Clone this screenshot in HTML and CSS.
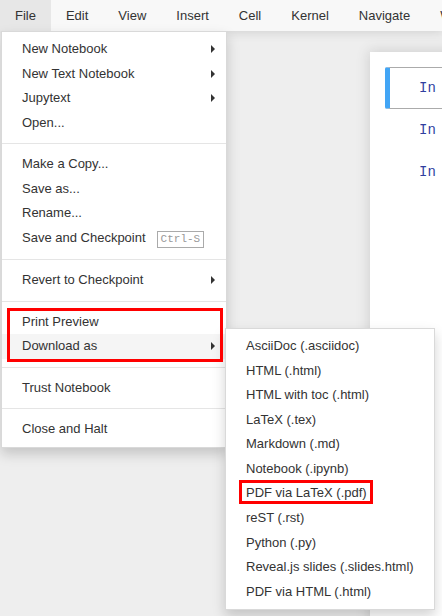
FILE: index.html
```html
<!DOCTYPE html>
<html>
<head>
<meta charset="utf-8">
<link rel="stylesheet" href="styles.css">
</head>
<body>
<div class="menubar">
  <ul class="nav">
    <li class="nav-item active">File
      <ul class="dropdown file-menu">
        <li class="item has-sub">New Notebook<span class="caret"></span></li>
        <li class="item has-sub">New Text Notebook<span class="caret"></span></li>
        <li class="item has-sub">Jupytext<span class="caret"></span></li>
        <li class="item">Open...</li>
        <li class="divider"></li>
        <li class="item">Make a Copy...</li>
        <li class="item">Save as...</li>
        <li class="item">Rename...</li>
        <li class="item">Save and Checkpoint<span class="kb">Ctrl-S</span></li>
        <li class="divider"></li>
        <li class="item has-sub">Revert to Checkpoint<span class="caret"></span></li>
        <li class="divider"></li>
        <li class="group marked">
          <ul class="group-list">
            <li class="item">Print Preview</li>
            <li class="item has-sub hover">Download as<span class="caret"></span>
              <ul class="dropdown submenu">
                <li class="item">AsciiDoc (.asciidoc)</li>
                <li class="item">HTML (.html)</li>
                <li class="item">HTML with toc (.html)</li>
                <li class="item">LaTeX (.tex)</li>
                <li class="item">Markdown (.md)</li>
                <li class="item">Notebook (.ipynb)</li>
                <li class="item"><span class="marked-text">PDF via LaTeX (.pdf)</span></li>
                <li class="item">reST (.rst)</li>
                <li class="item">Python (.py)</li>
                <li class="item">Reveal.js slides (.slides.html)</li>
                <li class="item">PDF via HTML (.html)</li>
              </ul>
            </li>
          </ul>
        </li>
        <li class="divider"></li>
        <li class="item">Trust Notebook</li>
        <li class="divider"></li>
        <li class="item">Close and Halt</li>
      </ul>
    </li>
    <li class="nav-item">Edit</li>
    <li class="nav-item">View</li>
    <li class="nav-item">Insert</li>
    <li class="nav-item">Cell</li>
    <li class="nav-item">Kernel</li>
    <li class="nav-item">Navigate</li>
    <li class="nav-item">Widgets</li>
    <li class="nav-item">Help</li>
  </ul>
</div>
<div class="site">
  <div class="notebook">
    <div class="cell selected"><div class="prompt">In&nbsp;[&nbsp;]:</div></div>
    <div class="cell"><div class="prompt">In&nbsp;[&nbsp;]:</div></div>
    <div class="cell"><div class="prompt">In&nbsp;[&nbsp;]:</div></div>
  </div>
</div>
</body>
</html>
```

FILE: styles.css
```css
html, body {
  margin: 0;
  padding: 0;
}
body {
  width: 442px;
  height: 616px;
  overflow: hidden;
  background: #eeeeee;
  font-family: "Liberation Sans", Arial, sans-serif;
  font-size: 13px;
  line-height: 1.42857143;
  color: #333333;
  position: relative;
}
ul {
  list-style: none;
  margin: 0;
  padding: 0;
}
.menubar {
  position: relative;
  z-index: 10;
  height: 31px;
  background: #f8f8f8;
  box-shadow: 0 0 10px 1px rgba(87, 87, 87, 0.2);
}
.nav {
  display: flex;
  white-space: nowrap;
  height: 31px;
}
.nav-item {
  position: relative;
  padding: 0 15px;
  line-height: 31px;
  flex: none;
}
.nav-item.active {
  background: #e7e7e7;
}
.dropdown {
  position: absolute;
  background: #ffffff;
  border: 1px solid rgba(0, 0, 0, 0.15);
  box-shadow: 0 6px 12px rgba(0, 0, 0, 0.175);
  padding: 5px 0;
  line-height: 1.42857143;
  box-sizing: border-box;
  white-space: nowrap;
}
.file-menu {
  top: 31px;
  left: 1px;
  width: 226px;
}
.item {
  position: relative;
  padding: 3px 20px;
  color: #333333;
}
.item.hover {
  background: #f5f5f5;
}
.divider {
  height: 1px;
  margin: 8px 0;
  background: #e5e5e5;
}
.caret {
  position: absolute;
  right: 11px;
  top: 50%;
  margin-top: -4px;
  width: 0;
  height: 0;
  border-left: 4px solid #333333;
  border-top: 4px solid transparent;
  border-bottom: 4px solid transparent;
}
.kb {
  display: inline-block;
  margin-left: 11px;
  padding: 0 3px;
  border: 1px solid #aaaaaa;
  font-family: "Liberation Mono", "Courier New", monospace;
  font-size: 11px;
  line-height: 15px;
  color: #999999;
  vertical-align: 0px;
}
.group {
  position: relative;
}
.group.marked::after {
  content: "";
  position: absolute;
  left: 5px;
  right: 3px;
  top: -2px;
  bottom: -3px;
  border: 3px solid #ff0000;
  pointer-events: none;
}
.submenu {
  top: 0;
  left: 100%;
  margin-top: -6px;
  margin-left: -1px;
  width: 210px;
}
.marked-text {
  position: relative;
}
.marked-text::after {
  content: "";
  position: absolute;
  left: -7px;
  right: -6px;
  top: -5px;
  bottom: -4px;
  border: 3px solid #ff0000;
}
.site {
  padding-top: 21px;
  padding-left: 370px;
}
.notebook {
  background: #ffffff;
  box-shadow: 0 0 12px 1px rgba(87, 87, 87, 0.2);
  padding: 15px 0 40px 15px;
  width: 600px;
  height: 600px;
}
.cell {
  height: 42px;
  box-sizing: border-box;
  border: 1px solid transparent;
  border-left: 5px solid transparent;
  border-right: none;
  display: flex;
  align-items: center;
}
.cell.selected {
  border-color: #ababab;
  border-left-color: #42a5f5;
  border-radius: 2px;
}
.prompt {
  padding-left: 29px;
  font-family: "Liberation Mono", "Courier New", monospace;
  font-size: 14px;
  color: #303f9f;
  white-space: nowrap;
}
```
